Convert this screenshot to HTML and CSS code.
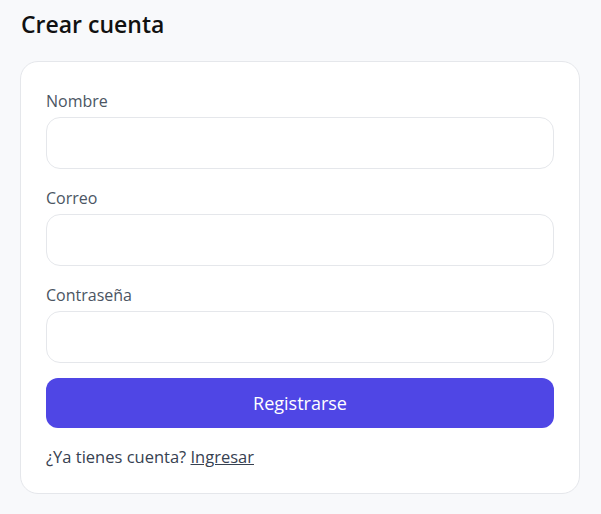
FILE: index.html
```html
<!DOCTYPE html>
<html lang="es">
<head>
<meta charset="utf-8">
<title>Crear cuenta</title>
<link rel="stylesheet" href="styles.css">
</head>
<body>
<main class="page">
  <h1 class="title">Crear cuenta</h1>
  <form class="card">
    <div class="field">
      <label class="label" for="nombre">Nombre</label>
      <input class="input" id="nombre" type="text">
    </div>
    <div class="field">
      <label class="label" for="correo">Correo</label>
      <input class="input" id="correo" type="email">
    </div>
    <div class="field">
      <label class="label" for="pass">Contraseña</label>
      <input class="input" id="pass" type="password">
    </div>
    <button class="button" type="button">Registrarse</button>
    <p class="footer">¿Ya tienes cuenta? <a class="link" href="#">Ingresar</a></p>
  </form>
</main>
</body>
</html>
```
FILE: styles.css
```css
* { box-sizing: border-box; }
html, body { margin: 0; padding: 0; }
body {
  background: #f8f9fb;
  font-family: "Open Sans", "Noto Sans", sans-serif;
  color: #374151;
}
.page {
  padding: 8px 20px 20px 20px;
  max-width: 601px;
}
.title {
  margin: 0 0 21px 1px;
  font-size: 23px;
  line-height: 32px;
  font-weight: 600;
  color: #111111;
}
.card {
  width: 560px;
  background: #ffffff;
  border: 1px solid #e5e7eb;
  border-radius: 18px;
  padding: 27px 25px 24px 25px;
  display: flex;
  flex-direction: column;
}
.field {
  display: flex;
  flex-direction: column;
  margin-bottom: 17px;
}
.field:nth-child(3) { margin-bottom: 15px; }
.label {
  font-size: 16px;
  line-height: 24px;
  color: #4b5563;
  margin-bottom: 4px;
}
.input {
  height: 52px;
  border: 1px solid #e5e7eb;
  border-radius: 14px;
  background: #fff;
  font: inherit;
  padding: 0 14px;
  outline: none;
}
.button {
  height: 50px;
  border: 0;
  border-radius: 12px;
  background: #4f46e5;
  color: #ffffff;
  font-family: inherit;
  font-size: 18px;
  font-weight: 500;
  margin-bottom: 17px;
  padding: 0;
}
.footer {
  margin: 0;
  font-size: 16.5px;
  line-height: 24px;
  color: #374151;
}
.link {
  color: #374151;
  text-decoration: underline;
}
```
